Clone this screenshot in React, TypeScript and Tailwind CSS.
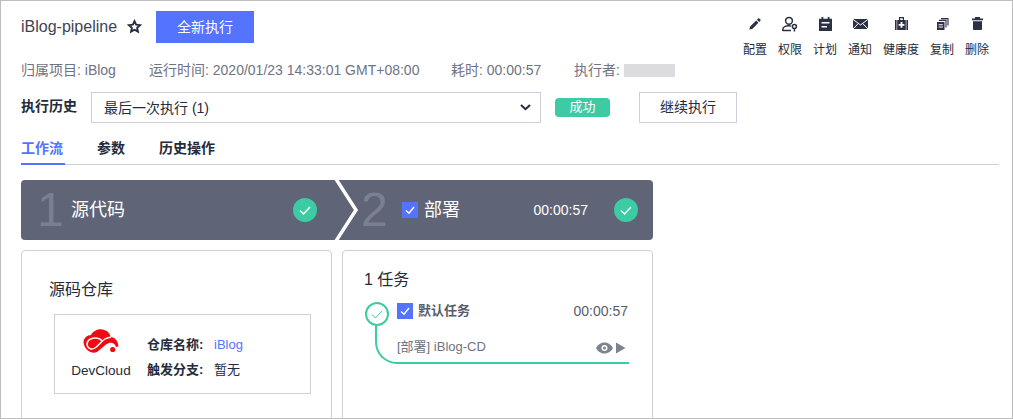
import React from 'react';

const font = { fontFamily: '"Liberation Sans", "Noto Sans CJK SC", sans-serif' };

const actions = [
  {
    label: '配置',
    icon: (
      <path d="M3 10.8 L2.4 13.6 L5.2 13 L11.4 6.8 L9.2 4.6 Z M10 3.8 L12.2 6 L13.4 4.8 C13.8 4.4 13.8 4 13.4 3.6 L12.2 2.6 C11.8 2.2 11.4 2.2 11 2.6 Z" fill="#2b3044" />
    ),
  },
  {
    label: '权限',
    icon: (
      <g fill="none" stroke="#2b3044" strokeWidth="1.5">
        <circle cx="7" cy="4.8" r="3.4" />
        <path d="M.8 15 V13.4 C.8 11 4 9.8 7 9.8 C8 9.8 8.6 9.9 9.2 10.1 M.8 14.6 H9" />
        <circle cx="12.4" cy="10.4" r="2" />
        <path d="M12.4 12.5 V15.5" />
      </g>
    ),
  },
  {
    label: '计划',
    icon: (
      <path fillRule="evenodd" d="M4.5 1 H6.3 V2.8 H10.7 V1 H12.5 V2.8 H15 V15 H2 V2.8 H4.5 Z M4.5 6 V7.4 H12.5 V6 Z M4.5 10 V11.4 H10 V10 Z" fill="#2b3044" />
    ),
  },
  {
    label: '通知',
    icon: (
      <g>
        <path d="M1 3 H16 V13 H1 Z" fill="#2b3044" />
        <path d="M1 3.4 L8.5 9 L16 3.4 M1 13 L6.4 7.4 M16 13 L10.6 7.4" fill="none" stroke="#ffffff" strokeWidth="1" />
      </g>
    ),
  },
  {
    label: '健康度',
    icon: (
      <path fillRule="evenodd" d="M6 1 H11 V4 H15 V14 H2 V4 H6 Z M7.2 2.2 V4 H9.8 V2.2 Z M7.6 6 V8 H5.6 V9.8 H7.6 V11.8 H9.4 V9.8 H11.4 V8 H9.4 V6 Z M3.6 4 V14 H4.2 V4 Z M12.8 4 V14 H13.4 V4 Z" fill="#2b3044" />
    ),
  },
  {
    label: '复制',
    icon: (
      <g>
        <path fillRule="evenodd" d="M3 6 H10.5 V14 H3 Z M4.6 8.2 V9.2 H8.9 V8.2 Z M4.6 10.6 V11.6 H8.9 V10.6 Z" fill="#2b3044" />
        <path d="M5 4.4 H12 V11.5 M7 2.6 H14 V9.5" fill="none" stroke="#2b3044" strokeWidth="1.1" />
      </g>
    ),
  },
  {
    label: '删除',
    icon: (
      <path d="M6 1 H11 V2.4 H14 V4.2 H3 V2.4 H6 Z M4 5.2 H13 V13 C13 13.6 12.6 14 12 14 H5 C4.4 14 4 13.6 4 13 Z" fill="#2b3044" />
    ),
  },
];

const CheckBadge: React.FC = () => (
  <span className="flex h-6 w-6 shrink-0 items-center justify-center rounded-full bg-[#3dcba3]">
    <svg width="14" height="14" viewBox="0 0 14 14">
      <path d="M2 7.5 L5.5 11 L12 4" fill="none" stroke="#ffffff" strokeWidth="1.5" />
    </svg>
  </span>
);

const CheckBox: React.FC = () => (
  <span className="flex h-4 w-4 shrink-0 items-center justify-center bg-[#5473ff]">
    <svg width="12" height="12" viewBox="0 0 12 12">
      <path d="M2 6.5 L5 9.2 L10 3" fill="none" stroke="#ffffff" strokeWidth="1.4" />
    </svg>
  </span>
);

const DevCloudLogo: React.FC = () => (
  <svg width="36" height="25" viewBox="0 0 36 25">
    <path
      d="M.6 14 C0 9.5 4 6.2 8 6 C10 2 15 0 19 .4 C24 1 27 4 27.6 8 C31.5 8 35.4 12 35.4 17.5 L33 18 C32 14.5 29 13.4 26 14 C22 15.5 18 20 14 23 C9.5 25.4 2 22 .6 14 Z"
      fill="#f00b12"
    />
    <path
      d="M4 16 C3.5 11.5 8 8.5 13 9 C16 9.3 18 10.5 19 12 M4 16 C5 20 9 21 12 19 C15 17 18 12.5 22 10 C24 8.8 26 8.3 28 8.3"
      fill="none"
      stroke="#ffffff"
      strokeWidth="1.4"
    />
    <circle cx="29.7" cy="20.5" r="2.6" fill="#f00b12" />
  </svg>
);

const App: React.FC = () => {
  return (
    <div
      style={font}
      className="h-[419px] w-[1013px] overflow-hidden border border-[#bdbdbd] bg-white pl-5 pr-[13px] text-[14px] text-[#252b3a]"
    >
      <div className="flex h-[61px] justify-between pr-[9px]">
        <div className="flex items-start pt-[10px]">
          <span className="mt-[6px] text-[16px] leading-5 text-[#3f4452]">iBlog-pipeline</span>
          <svg className="ml-[10px] mt-[8px]" width="15" height="15" viewBox="0 0 24 24">
            <path d="M12 3.5 L14.6 9.2 L20.8 9.9 L16.2 14.1 L17.5 20.3 L12 17.2 L6.5 20.3 L7.8 14.1 L3.2 9.9 L9.4 9.2 Z" fill="none" stroke="#252b3a" strokeWidth="3" />
          </svg>
          <button className="ml-[14px] h-8 w-[98px] bg-[#5473ff] text-[14px] text-white">全新执行</button>
        </div>
        <div className="flex gap-[11px] pr-px pt-[15px]">
          {actions.map((a) => (
            <div key={a.label} className="flex flex-col items-center">
              <svg width="16" height="16" viewBox="0 0 16 16">
                {a.icon}
              </svg>
              <span className="mt-[10px] text-[12px] leading-4 text-[#252b3a]">{a.label}</span>
            </div>
          ))}
        </div>
      </div>

      <div className="flex h-[16px] items-center leading-4 text-[#6f7383]">
        <span className="w-[128px]">归属项目: iBlog</span>
        <span className="w-[302px]">运行时间: 2020/01/23 14:33:01 GMT+08:00</span>
        <span className="w-[123px]">耗时: 00:00:57</span>
        <span>执行者:</span>
        <span className="ml-[4px] h-[13px] w-[51px] bg-[#dcdbe0]" />
      </div>

      <div className="mt-[14px] flex h-[31px] items-center">
        <span className="w-[70px] -translate-y-px font-bold">执行历史</span>
        <div className="flex h-[31px] w-[450px] items-center justify-between border border-[#cdd0da] pl-3 pr-[9px]">
          <span className="translate-y-px">最后一次执行 (1)</span>
          <svg width="11" height="7" viewBox="0 0 11 7">
            <path d="M1 1 L5.5 5.2 L10 1" fill="none" stroke="#252b3a" strokeWidth="2" />
          </svg>
        </div>
        <span className="ml-[14px] h-[19px] w-[55px] rounded-sm bg-[#3dcba3] text-center text-[13px] leading-[18px] text-white">成功</span>
        <button className="ml-[29px] h-[31px] w-[98px] border border-[#cdd0da] text-[14px]">继续执行</button>
      </div>

      <div className="mt-[14px] flex h-[28px] gap-[32px] border-b border-[#cdd0da] pt-px font-bold">
        <span className="h-[27px] w-[44px] border-b-2 border-[#5473ff] leading-[20px] text-[#5473ff]">工作流</span>
        <span className="leading-[20px]">参数</span>
        <span className="ml-[2px] leading-[20px]">历史操作</span>
      </div>

      <div className="w-[632px]">
        <div className="relative mt-[15px] flex h-[60px] rounded bg-[#5f6477] text-white">
          <div className="flex w-[320px] items-center pl-[16px] pr-[24px]">
            <span className="w-[34px] text-[48px] leading-none text-[#7b8090]">1</span>
            <span className="text-[18px]">源代码</span>
            <span className="ml-auto">
              <CheckBadge />
            </span>
          </div>
          <div className="flex flex-1 items-center pl-[20px] pr-[15px]">
            <span className="w-[41px] text-[48px] leading-none text-[#7b8090]">2</span>
            <CheckBox />
            <span className="ml-[6px] text-[18px]">部署</span>
            <span className="ml-auto mr-[26px]">00:00:57</span>
            <CheckBadge />
          </div>
          <svg className="absolute left-[312px] top-0" width="26" height="60" viewBox="0 0 26 60">
            <path d="M3 -1 L23 30 L3 61" fill="none" stroke="#ffffff" strokeWidth="3.5" />
          </svg>
        </div>

        <div className="mt-[10px] flex gap-[10px]">
          <div className="h-[200px] w-[311px] shrink-0 rounded border border-[#cdd0da] pl-[27px] pt-[28px]">
            <div className="text-[16px] leading-[22px]">源码仓库</div>
            <div className="ml-[5px] mt-[13px] flex h-[80px] w-[257px] border border-[#cdd0da]">
              <div className="ml-[16px] flex w-[60px] flex-col items-center pt-[14px]">
                <DevCloudLogo />
                <span className="mt-[7px] text-[13.5px] leading-5">DevCloud</span>
              </div>
              <div className="ml-[16px] grid grid-cols-[67px_auto] content-start gap-y-[5px] pt-[20px] text-[13px] leading-5">
                <span className="font-bold">仓库名称:</span>
                <span className="text-[#5473ff]">iBlog</span>
                <span className="font-bold">触发分支:</span>
                <span>暂无</span>
              </div>
            </div>
          </div>

          <div className="h-[200px] w-[311px] shrink-0 rounded border border-[#cdd0da] pl-[21px] pr-[24px] pt-[18px]">
            <div className="text-[16px] leading-[22px]">1 任务</div>
            <div className="ml-px mt-[11px] flex items-start">
              <span className="flex h-6 w-6 items-center justify-center rounded-full border-2 border-[#3dcba3]">
                <svg width="14" height="14" viewBox="0 0 14 14">
                  <path d="M2 7.5 L5.5 11 L12 4" fill="none" stroke="#3dcba3" strokeWidth="1" />
                </svg>
              </span>
              <span className="ml-2 mt-[1px]">
                <CheckBox />
              </span>
              <span className="ml-[5px] text-[13px] font-bold leading-[18px] text-[#575d6c]">默认任务</span>
              <span className="ml-auto leading-[18px] text-[#575d6c]">00:00:57</span>
            </div>
            <div className="-mr-px ml-[11px] flex h-[38px] items-end justify-between rounded-bl-[22px] border-b-2 border-l-2 border-[#3dcba3] pb-[5px] pl-[20px]">
              <span className="text-[13px] leading-5 text-[#6f7383]">[部署] iBlog-CD</span>
              <span className="mb-[3px] flex items-center gap-[3px] pr-[3px]">
                <svg width="17" height="12" viewBox="0 0 17 12">
                  <path fillRule="evenodd" d="M8.5 .5 C12.5 .5 15.5 3 17 6 C15.5 9 12.5 11.5 8.5 11.5 C4.5 11.5 1.5 9 0 6 C1.5 3 4.5 .5 8.5 .5 Z M8.5 3 A3 3 0 1 0 8.5 9 A3 3 0 1 0 8.5 3 Z M8.5 4.5 A1.5 1.5 0 1 1 8.5 7.5 A1.5 1.5 0 1 1 8.5 4.5 Z" fill="#7f8390" />
                </svg>
                <svg width="10" height="12" viewBox="0 0 10 12">
                  <path d="M0 .5 L9.5 6 L0 11.5 Z" fill="#7f8390" />
                </svg>
              </span>
            </div>
          </div>
        </div>
      </div>
    </div>
  );
};

export default App;
